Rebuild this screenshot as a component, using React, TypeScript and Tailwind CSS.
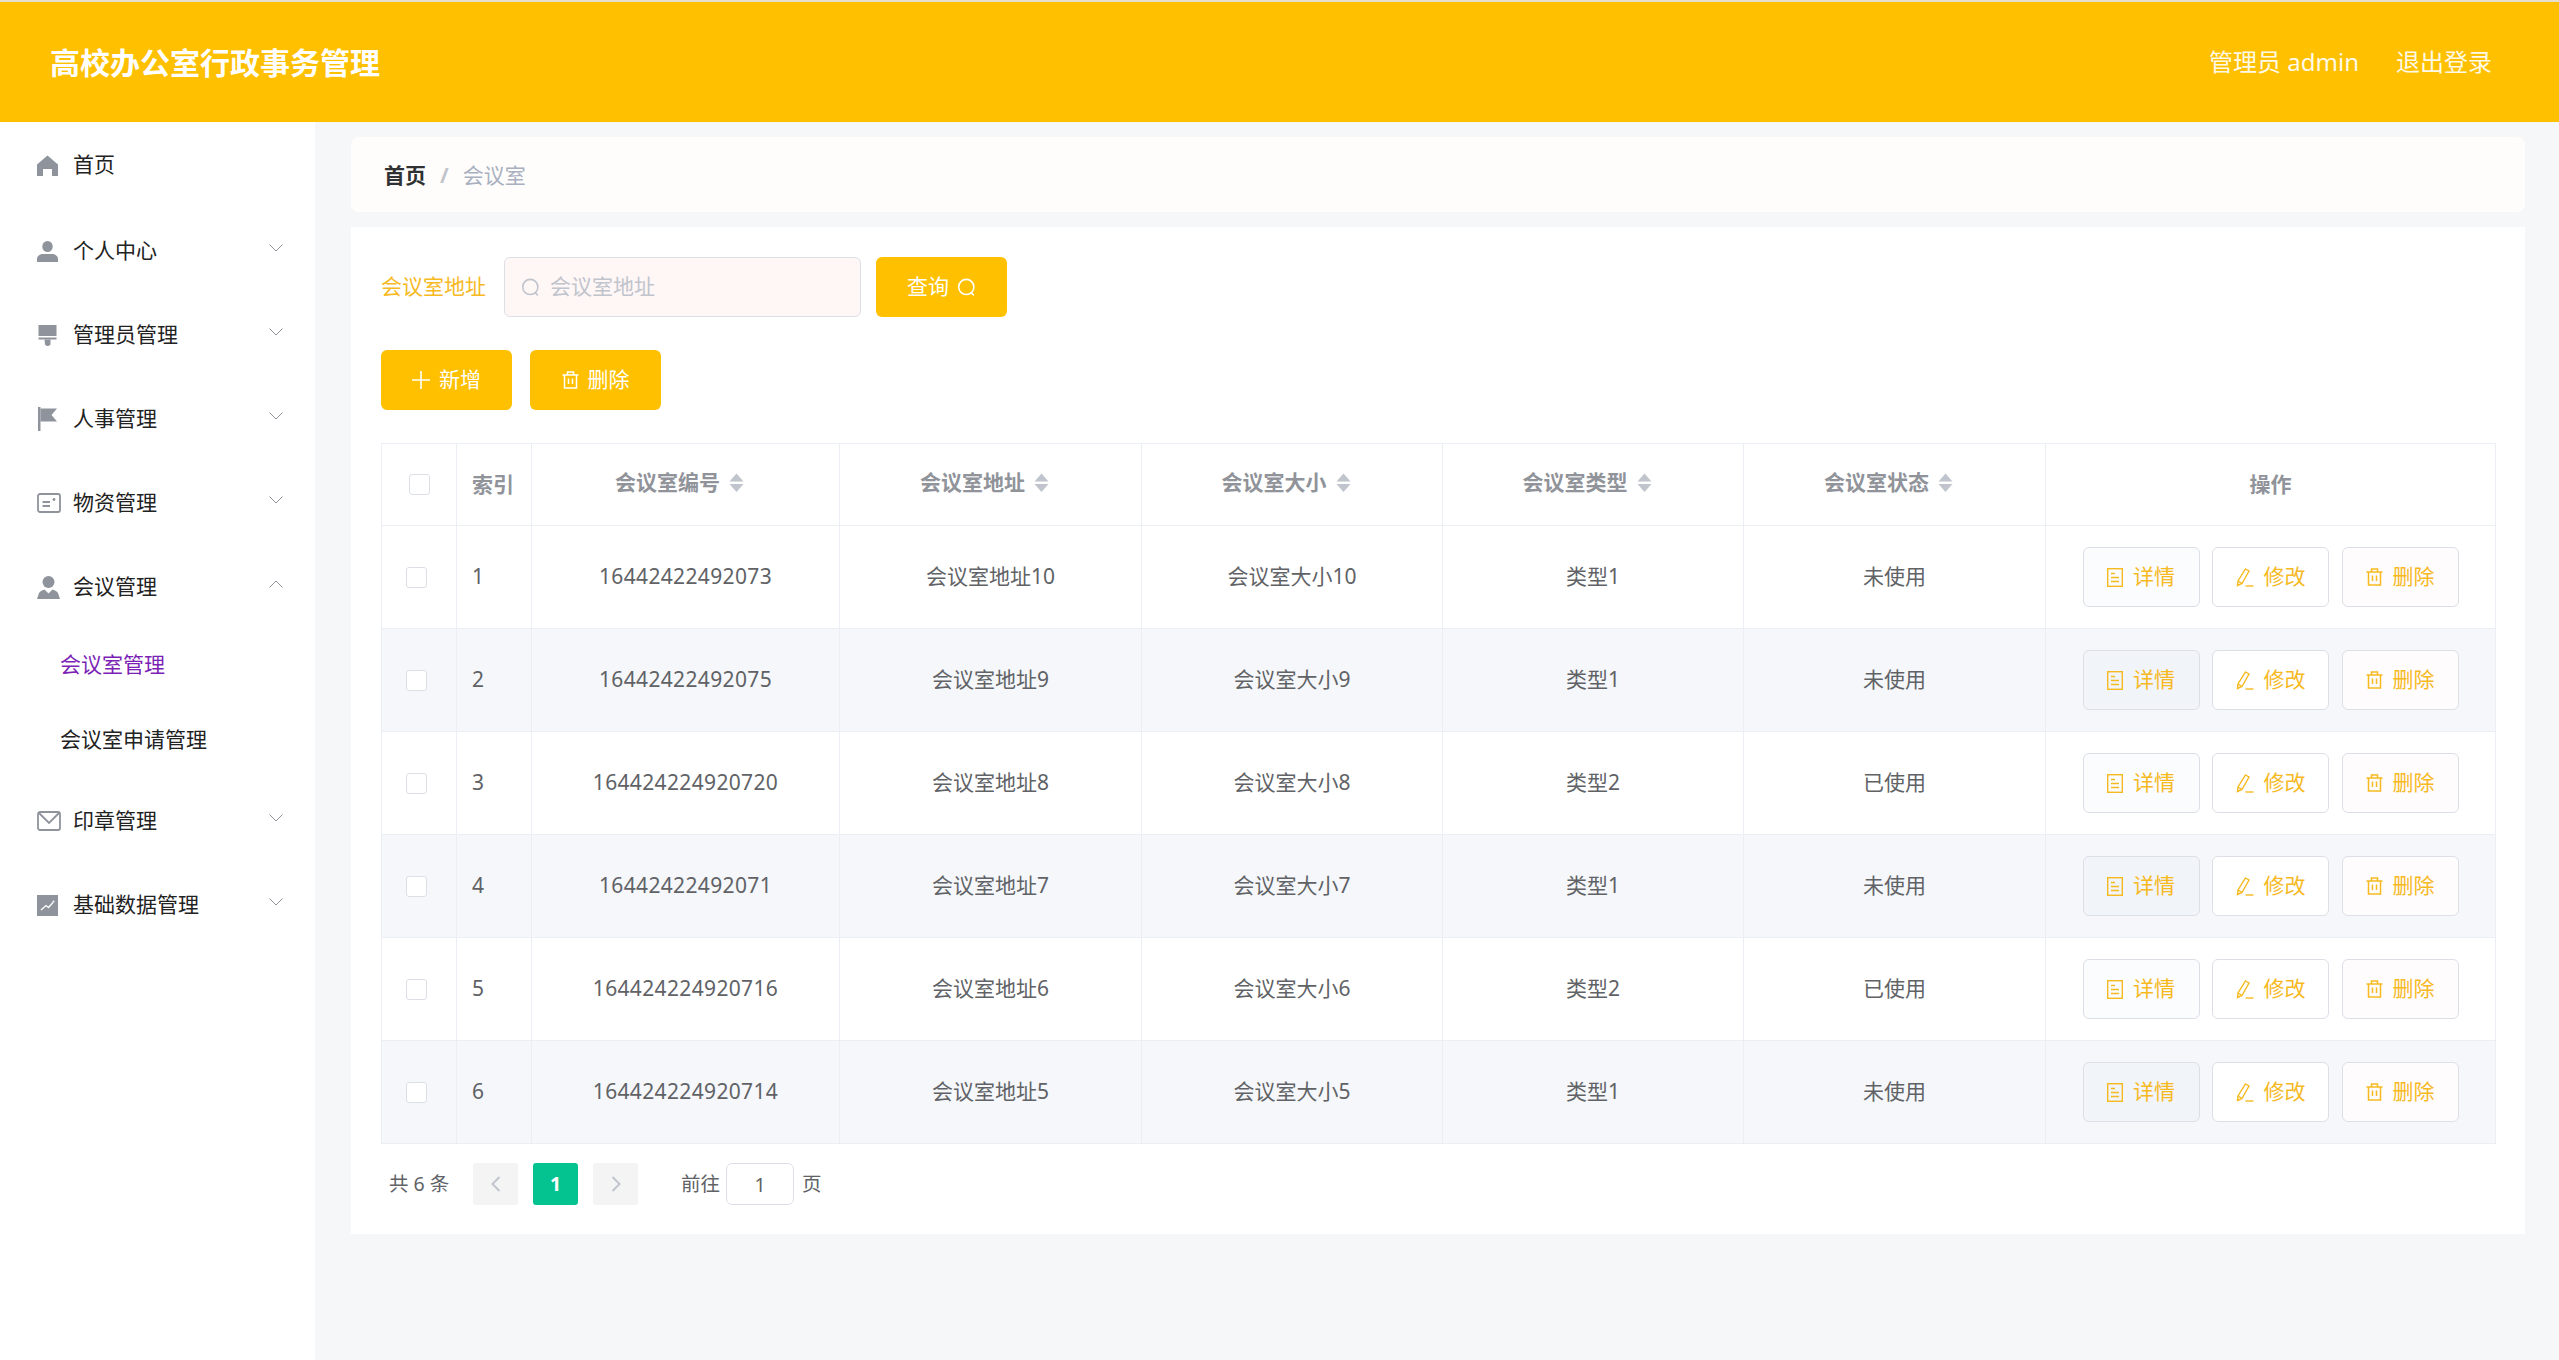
import React from "react";

const Y = "#f6b91f";

function Home() {
  return (
    <svg viewBox="0 0 21 21" className="w-[21px] h-[21px]" fill="#8f939c">
      <path fillRule="evenodd" d="M10.5 0.5 L21 9.5 V21 H15 V14 H6 V21 H0 V9.5 Z" />
    </svg>
  );
}
function User() {
  return (
    <svg viewBox="0 0 21 21" className="w-[21px] h-[21px]" fill="#8f939c">
      <ellipse cx="10.5" cy="5.5" rx="5.2" ry="5.5" />
      <path d="M0 21 V18 C0 14.5 3.5 13 6 13 H15 C17.5 13 21 14.5 21 18 V21 Z" />
    </svg>
  );
}
function Brush() {
  return (
    <svg viewBox="0 0 21 21" className="w-[21px] h-[21px]" fill="#8f939c">
      <rect x="1.5" y="0" width="18" height="11" />
      <rect x="1.5" y="12.5" width="18" height="2" />
      <path d="M7.5 14.5 H13.5 V19.5 Q10.5 22.5 8 19.5 Z" />
    </svg>
  );
}
function Flag() {
  return (
    <svg viewBox="0 0 21 24" className="w-[21px] h-[24px]" fill="#8f939c">
      <rect x="1" y="0" width="2.5" height="24" />
      <path d="M3.5 1.5 H20 L14.5 8 L20 14.5 H3.5 Z" />
    </svg>
  );
}
function Card() {
  return (
    <svg viewBox="0 0 24 20" className="w-[24px] h-[20px]" fill="none" stroke="#8f939c" strokeWidth="1.8">
      <rect x="1" y="1" width="22" height="18" rx="2" />
      <path d="M5.5 9 H13 M5.5 13 H13" />
      <circle cx="17" cy="6.5" r="1.4" fill="#8f939c" stroke="none" />
    </svg>
  );
}
function Custom() {
  return (
    <svg viewBox="0 0 23 23" className="w-[23px] h-[23px]" fill="#8f939c">
      <ellipse cx="11.5" cy="6" rx="6" ry="6" />
      <path d="M0 23 L2 17 C3 15 6 14 7.5 13.5 L11.5 17.5 L15.5 13.5 C17 14 20 15 21 17 L23 23 Z" />
    </svg>
  );
}
function Mail() {
  return (
    <svg viewBox="0 0 24 20" className="w-[24px] h-[20px]" fill="none" stroke="#8f939c" strokeWidth="1.8">
      <rect x="1" y="1" width="22" height="18" rx="2" />
      <path d="M2 2 L12 12 L22 2" />
    </svg>
  );
}
function Chart() {
  return (
    <svg viewBox="0 0 21 21" className="w-[21px] h-[21px]">
      <rect width="21" height="21" fill="#8f939c" />
      <path d="M4 15 L9 10.5 L11.5 12.5 L16 7.5" fill="none" stroke="#fff" strokeWidth="1.3" />
      <circle cx="16.5" cy="6.5" r="1" fill="#fff" />
    </svg>
  );
}
function Chev({ up }: { up?: boolean }) {
  return (
    <svg viewBox="0 0 14 8" className="w-[14px] h-[8px] mr-[32px] mb-[6px]" fill="none" stroke="#909399" strokeWidth="1">
      <path d={up ? "M0.5 7.5 L7 1 L13.5 7.5" : "M0.5 0.5 L7 7 L13.5 0.5"} />
    </svg>
  );
}
function SearchI({ c, s }: { c: string; s: number }) {
  return (
    <svg viewBox="0 0 18 18" style={{ width: s, height: s }} fill="none" stroke={c} strokeWidth="1.5">
      <circle cx="8.8" cy="8.5" r="7.2" />
      <path d="M13.5 14 L16 16.5" />
    </svg>
  );
}
function Trash({ c }: { c: string }) {
  return (
    <svg viewBox="0 0 17 18" className="w-[17px] h-[18px]" fill="none" stroke={c} strokeWidth="1.5">
      <path d="M0.5 4 H16.5 M5.5 4 V1 H11.5 V4 M2.5 4 V17 H14.5 V4 M6.5 7.5 V13 M10.5 7.5 V13" />
    </svg>
  );
}
function Doc({ c }: { c: string }) {
  return (
    <svg viewBox="0 0 16 19" className="w-[16px] h-[19px]" fill="none" stroke={c} strokeWidth="1.4">
      <rect x="0.7" y="0.7" width="14.6" height="17.6" />
      <path d="M4 5.5 H8 M4 9.5 H12 M4 13.5 H12" />
    </svg>
  );
}
function Edit({ c }: { c: string }) {
  return (
    <svg viewBox="0 0 18 19" className="w-[18px] h-[19px]" fill="none" stroke={c} strokeWidth="1.4">
      <path d="M9.5 1 L13 3 L6 15.5 L1.5 17.5 L2 13 Z M2 13 L6 15.5" />
      <path d="M9.5 18 H17.5" />
    </svg>
  );
}
function Carets() {
  return (
    <span className="w-[36px] flex justify-center pr-[3px]">
      <svg viewBox="0 0 15 20" className="w-[15px] h-[20px]" fill="#c0c4cc">
        <polygon points="7.5,0.5 14.5,8.5 0.5,8.5" />
        <polygon points="0.5,11 14.5,11 7.5,19" />
      </svg>
    </span>
  );
}

function MenuRow({ icon, label, open, arrow = true }: { icon: React.ReactNode; label: string; open?: boolean; arrow?: boolean }) {
  return (
    <div className="h-[84px] flex items-center">
      <span className="w-[73px] pl-[37px] flex items-center">{icon}</span>
      <span className="flex-1 text-[21px] text-[#222]">{label}</span>
      {arrow && <Chev up={open} />}
    </div>
  );
}

const rows = [
  ["1", "16442422492073", "会议室地址10", "会议室大小10", "类型1", "未使用"],
  ["2", "16442422492075", "会议室地址9", "会议室大小9", "类型1", "未使用"],
  ["3", "164424224920720", "会议室地址8", "会议室大小8", "类型2", "已使用"],
  ["4", "16442422492071", "会议室地址7", "会议室大小7", "类型1", "未使用"],
  ["5", "164424224920716", "会议室地址6", "会议室大小6", "类型2", "已使用"],
  ["6", "164424224920714", "会议室地址5", "会议室大小5", "类型1", "未使用"],
];
const sortable = ["会议室编号", "会议室地址", "会议室大小", "会议室类型", "会议室状态"];

function OpBtn({ bg, icon, label }: { bg: string; icon: React.ReactNode; label: string }) {
  return (
    <button className={`w-[117px] h-[60px] rounded-[6px] border border-[#dcdfe6] flex items-center justify-center gap-[10px] text-[21px] text-[#f6b91f] ${bg}`}>
      {icon}
      <span>{label}</span>
    </button>
  );
}

export default function App() {
  return (
    <div className="h-[1360px] w-full overflow-hidden flex flex-col bg-[#f6f7f9] font-['Noto_Sans','Noto_Sans_CJK_SC',sans-serif]">
      <header className="h-[122px] shrink-0 border-t-2 border-[#e6e0cc] bg-[#ffc000] flex items-center justify-between pl-[50px] pr-[67px] text-white">
        <div className="text-[30px] font-bold">高校办公室行政事务管理</div>
        <div className="flex items-center gap-[37px] text-[24px] text-[#fff9e6]">
          <span>管理员 admin</span>
          <span>退出登录</span>
        </div>
      </header>
      <div className="flex flex-1 min-h-0">
        <aside className="w-[315px] shrink-0 bg-white pt-[1px]">
          <div className="mb-[2px]">
            <MenuRow icon={<Home />} label="首页" arrow={false} />
          </div>
          <MenuRow icon={<User />} label="个人中心" />
          <MenuRow icon={<Brush />} label="管理员管理" />
          <MenuRow icon={<Flag />} label="人事管理" />
          <MenuRow icon={<Card />} label="物资管理" />
          <MenuRow icon={<Custom />} label="会议管理" open />
          <div className="h-[75px] flex items-center pl-[60px] pb-[4px] text-[21px] text-[#7b1fb5]">会议室管理</div>
          <div className="h-[75px] flex items-center pl-[60px] pb-[4px] text-[21px] text-[#222]">会议室申请管理</div>
          <MenuRow icon={<Mail />} label="印章管理" />
          <MenuRow icon={<Chart />} label="基础数据管理" />
        </aside>
        <main className="flex-1 min-w-0 pt-[15px] pl-[36px] pr-[34px]">
          <div className="h-[75px] rounded-[8px] bg-[#fffdfb] flex items-center pl-[33px] pt-[2px] text-[21px]">
            <span className="font-bold text-[#303133]">首页</span>
            <span className="mx-[14px] text-[#c0c4cc] font-bold">/</span>
            <span className="text-[#a8b0c0]">会议室</span>
          </div>
          <section className="mt-[15px] bg-white px-[30px] pt-[30px] pb-[29px]">
            <div className="flex items-center h-[60px]">
              <span className="w-[123px] text-[21px] text-[#f6b91f]">会议室地址</span>
              <div className="w-[357px] h-[60px] rounded-[6px] border border-[#dcdfe6] bg-[#fff6f6] flex items-center pl-[16px] gap-[10px]">
                <SearchI c="#c0c4cc" s={19} />
                <input className="flex-1 min-w-0 bg-transparent outline-none text-[21px] placeholder:text-[#c0c4cc]" placeholder="会议室地址" />
              </div>
              <button className="ml-[15px] w-[131px] h-[60px] rounded-[6px] bg-[#ffc000] text-white text-[21px] flex items-center justify-center gap-[8px]">
                <span>查询</span>
                <SearchI c="#fff" s={19} />
              </button>
            </div>
            <div className="flex items-center gap-[18px] mt-[33px]">
              <button className="w-[131px] h-[60px] rounded-[6px] bg-[#ffc000] text-white text-[21px] flex items-center justify-center gap-[9px]">
                <svg viewBox="0 0 18 18" className="w-[18px] h-[18px]" fill="none" stroke="#fff" strokeWidth="1.6"><path d="M9 0 V18 M0 9 H18" /></svg>
                <span>新增</span>
              </button>
              <button className="w-[131px] h-[60px] rounded-[6px] bg-[#ffc000] text-white text-[21px] flex items-center justify-center gap-[9px]">
                <Trash c="#fff" />
                <span>删除</span>
              </button>
            </div>
            <table className="mt-[33px] w-[2114px] table-fixed border-collapse text-[21px] text-[#606266]">
              <colgroup>
                <col className="w-[75px]" />
                <col className="w-[75px]" />
                <col className="w-[308px]" />
                <col className="w-[302px]" />
                <col className="w-[301px]" />
                <col className="w-[301px]" />
                <col className="w-[302px]" />
                <col className="w-[450px]" />
              </colgroup>
              <thead>
                <tr className="h-[82px] text-[#909399] font-bold">
                  <th className="border border-[#ebeef5]">
                    <span className="block w-[21px] h-[21px] ml-[27px] rounded-[3px] border border-[#dcdfe6] bg-white" />
                  </th>
                  <th className="border border-[#ebeef5] text-left pl-[15px]">索引</th>
                  {sortable.map((s) => (
                    <th key={s} className="border border-[#ebeef5]">
                      <span className="flex items-center justify-center pb-[3px]">
                        <span>{s}</span>
                        <Carets />
                      </span>
                    </th>
                  ))}
                  <th className="border border-[#ebeef5]">操作</th>
                </tr>
              </thead>
              <tbody>
                {rows.map((r, i) => {
                  const even = i % 2 === 1;
                  return (
                    <tr key={r[0]} className={even ? "h-[103px] bg-[#f5f7fa]" : "h-[103px] bg-white"}>
                      <td className="border border-[#ebeef5]">
                        <span className="block w-[21px] h-[21px] ml-[24px] rounded-[3px] border border-[#dcdfe6] bg-white" />
                      </td>
                      <td className="border border-[#ebeef5] pl-[15px]">{r[0]}</td>
                      <td className="border border-[#ebeef5] text-center tracking-[0.35px]">{r[1]}</td>
                      {r.slice(2).map((c, j) => (
                        <td key={j} className="border border-[#ebeef5] text-center">{c}</td>
                      ))}
                      <td className="border border-[#ebeef5]">
                        <div className="flex justify-center gap-[12.5px]">
                          <OpBtn bg={even ? "bg-[#f1f4f9]" : "bg-[#fafcfe]"} icon={<Doc c={Y} />} label="详情" />
                          <OpBtn bg="bg-white" icon={<Edit c={Y} />} label="修改" />
                          <OpBtn bg="bg-[#fffcfd]" icon={<Trash c={Y} />} label="删除" />
                        </div>
                      </td>
                    </tr>
                  );
                })}
              </tbody>
            </table>
            <div className="mt-[19px] h-[42px] flex items-center text-[19.5px] text-[#606266] pl-[8px]">
              <span className="w-[84px]">共 6 条</span>
              <button className="w-[45px] h-[42px] rounded-[3px] bg-[#f4f4f5] flex items-center justify-center">
                <svg viewBox="0 0 10 16" className="w-[10px] h-[16px]" fill="none" stroke="#c0c4cc" strokeWidth="2"><path d="M8.5 1 L1.5 8 L8.5 15" /></svg>
              </button>
              <button className="ml-[15px] w-[45px] h-[42px] rounded-[3px] bg-[#05c291] text-white font-bold flex items-center justify-center">1</button>
              <button className="ml-[15px] w-[45px] h-[42px] rounded-[3px] bg-[#f4f4f5] flex items-center justify-center">
                <svg viewBox="0 0 10 16" className="w-[10px] h-[16px]" fill="none" stroke="#c0c4cc" strokeWidth="2"><path d="M1.5 1 L8.5 8 L1.5 15" /></svg>
              </button>
              <span className="ml-[43px]">前往</span>
              <input readOnly defaultValue="1" className="ml-[6px] w-[68px] h-[42px] rounded-[6px] border border-[#dcdfe6] text-center outline-none text-[#606266] text-[19.5px]" />
              <span className="ml-[8px]">页</span>
            </div>
          </section>
        </main>
      </div>
    </div>
  );
}
